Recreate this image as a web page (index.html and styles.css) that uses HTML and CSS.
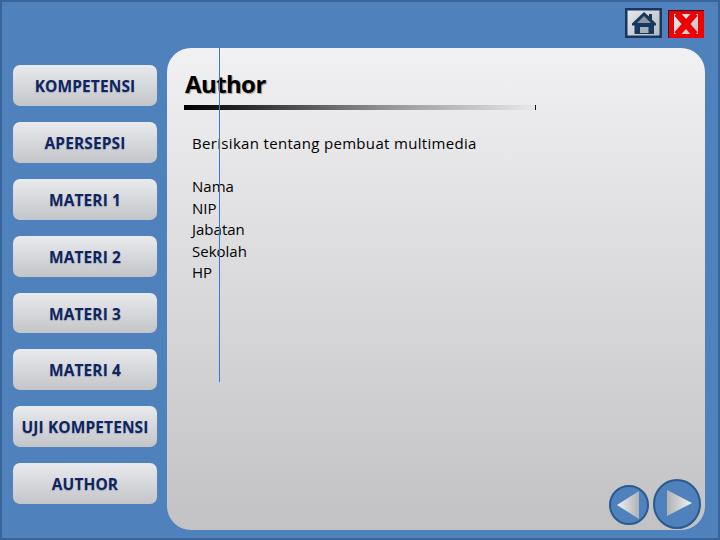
FILE: index.html
```html
<!DOCTYPE html>
<html lang="id">
<head>
<meta charset="utf-8">
<title>Author</title>
<link rel="stylesheet" href="styles.css">
</head>
<body>
<div class="slide">
  <header class="topbar">
    <a class="home-btn" aria-label="Home">
      <svg width="37" height="30" viewBox="0 0 37 30">
        <defs><linearGradient id="hb" x1="0" y1="0" x2="1" y2="1"><stop offset="0" stop-color="#e8eaee"/><stop offset="1" stop-color="#b4b7bd"/></linearGradient></defs>
        <rect x="1.25" y="1.25" width="34.5" height="27.5" fill="url(#hb)" stroke="#17375e" stroke-width="2.5"/>
        <path d="M7 15.5 L19 4 L24 8.5 V6 H27 V11.5 L31 15.5 V17.5 H29 V26 H9.5 V17.5 H7 Z" fill="#17375e"/>
        <path d="M19 8 L12 15 H26 Z" fill="#8c96a3"/>
        <path d="M15 19 H23.5 V25 H15 Z" fill="#a9afb8"/>
      </svg>
    </a>
    <a class="close-btn" aria-label="Close">
      <svg width="36" height="28" viewBox="0 0 36 28">
        <defs><linearGradient id="cb" x1="0" y1="0" x2="1" y2="1"><stop offset="0" stop-color="#ececec"/><stop offset="1" stop-color="#c2c2c2"/></linearGradient></defs>
        <rect x="0" y="0" width="36" height="28" fill="#f00000"/>
        <path d="M0.5 28 V0.5 H36" fill="none" stroke="#2a1a2a" stroke-width="1"/>
        <rect x="6" y="4" width="24" height="20" fill="url(#cb)"/>
        <path d="M11 6 L25 22 M25 6 L11 22" fill="none" stroke="#f00000" stroke-width="6.5" stroke-linecap="square"/>
      </svg>
    </a>
  </header>
  <div class="main">
    <nav class="sidebar">
      <a class="menu-btn">KOMPETENSI</a>
      <a class="menu-btn">APERSEPSI</a>
      <a class="menu-btn">MATERI 1</a>
      <a class="menu-btn">MATERI 2</a>
      <a class="menu-btn">MATERI 3</a>
      <a class="menu-btn">MATERI 4</a>
      <a class="menu-btn">UJI KOMPETENSI</a>
      <a class="menu-btn">AUTHOR</a>
    </nav>
    <section class="panel">
      <div class="guide"></div>
      <h1 class="title">Author</h1>
      <div class="rule-row"><div class="rule"></div><div class="tick"></div></div>
      <p class="lead">Berisikan tentang pembuat multimedia</p>
      <ul class="fields">
        <li>Nama</li>
        <li>NIP</li>
        <li>Jabatan</li>
        <li>Sekolah</li>
        <li>HP</li>
      </ul>
      <div class="pager">
        <svg width="40" height="40" viewBox="0 0 40 40" class="prev">
          <defs><linearGradient id="ar1" x1="0" y1="0" x2="1" y2="0"><stop offset="0" stop-color="#f0f1f3"/><stop offset="1" stop-color="#b0b2b6"/></linearGradient></defs>
          <circle cx="20" cy="20" r="19" fill="#4f81bd" stroke="#2a5a8e" stroke-width="2"/>
          <path d="M8 20 L30 6 V34 Z" fill="url(#ar1)"/>
        </svg>
        <svg width="48" height="50" viewBox="0 0 48 50">
          <defs><linearGradient id="ar2" x1="0" y1="0" x2="1" y2="0"><stop offset="0" stop-color="#b0b2b6"/><stop offset="1" stop-color="#f0f1f3"/></linearGradient></defs>
          <ellipse cx="24" cy="25" rx="23" ry="24" fill="#4f81bd" stroke="#2a5a8e" stroke-width="2"/>
          <path d="M14 11 L39 24 L14 37 Z" fill="url(#ar2)"/>
        </svg>
      </div>
    </section>
  </div>
</div>
</body>
</html>
```
FILE: styles.css
```css
* { box-sizing: border-box; }
html, body { margin: 0; padding: 0; }
body { width: 720px; height: 540px; overflow: hidden; font-family: "Open Sans", sans-serif; }
.slide {
  width: 720px; height: 540px;
  background: #4f81bd;
  border: 2px solid #3a659b;
  display: flex; flex-direction: column;
}
.topbar {
  height: 46px;
  display: flex; justify-content: flex-end; align-items: flex-start;
  gap: 6px;
  padding: 6px 14px 0 0;
}
.home-btn, .close-btn { display: block; height: 30px; }
.close-btn { margin-top: 2px; }
.main { display: flex; flex: 1; padding: 0 13px 8px 11px; }
.sidebar {
  width: 154px;
  padding-top: 17px;
  display: flex; flex-direction: column; gap: 16px;
}
.menu-btn {
  width: 144px; height: 40.9px;
  border-radius: 7px;
  background: linear-gradient(#e9eaee, #c4c5c9);
  color: #10255f;
  font-weight: 700; font-size: 15.5px;
  letter-spacing: 0.1px;
  padding-top: 1px;
  display: flex; align-items: center; justify-content: center;
  text-shadow: 0 1px 1px rgba(15,42,99,.25);
}
.panel {
  position: relative;
  flex: 1;
  border-radius: 24px;
  background: linear-gradient(#f1f1f3, #c2c2c4);
  padding: 19px 0 0 17px;
  color: #000;
}
.guide {
  position: absolute; left: 52px; top: 0;
  width: 1px; height: 334px;
  background: #4078c8;
}
.title {
  margin: 0 0 0 1px;
  font-weight: 700; font-size: 24px; line-height: 34px;
  letter-spacing: -0.6px;
  text-shadow: 1px 1px 1px rgba(0,0,0,.35);
}
.rule-row { display: flex; align-items: center; height: 6px; margin-top: 3px; }
.rule { width: 351px; height: 5px; background: linear-gradient(to right, #000 0, #222 15%, #999 60%, #e8e8ea 100%); }
.tick { width: 1px; height: 5px; background: #111; }
.lead {
  margin: 23px 0 0 8px;
  font-size: 15px; line-height: 21px;
  letter-spacing: .32px;
}
.fields {
  list-style: none;
  margin: 22px 0 0 8px; padding: 0;
  font-size: 15px; line-height: 21.5px;
}
.pager {
  position: absolute; right: 4px; bottom: 1px;
  display: flex; align-items: flex-start; gap: 4px;
}
.prev { margin-top: 6px; }
```
